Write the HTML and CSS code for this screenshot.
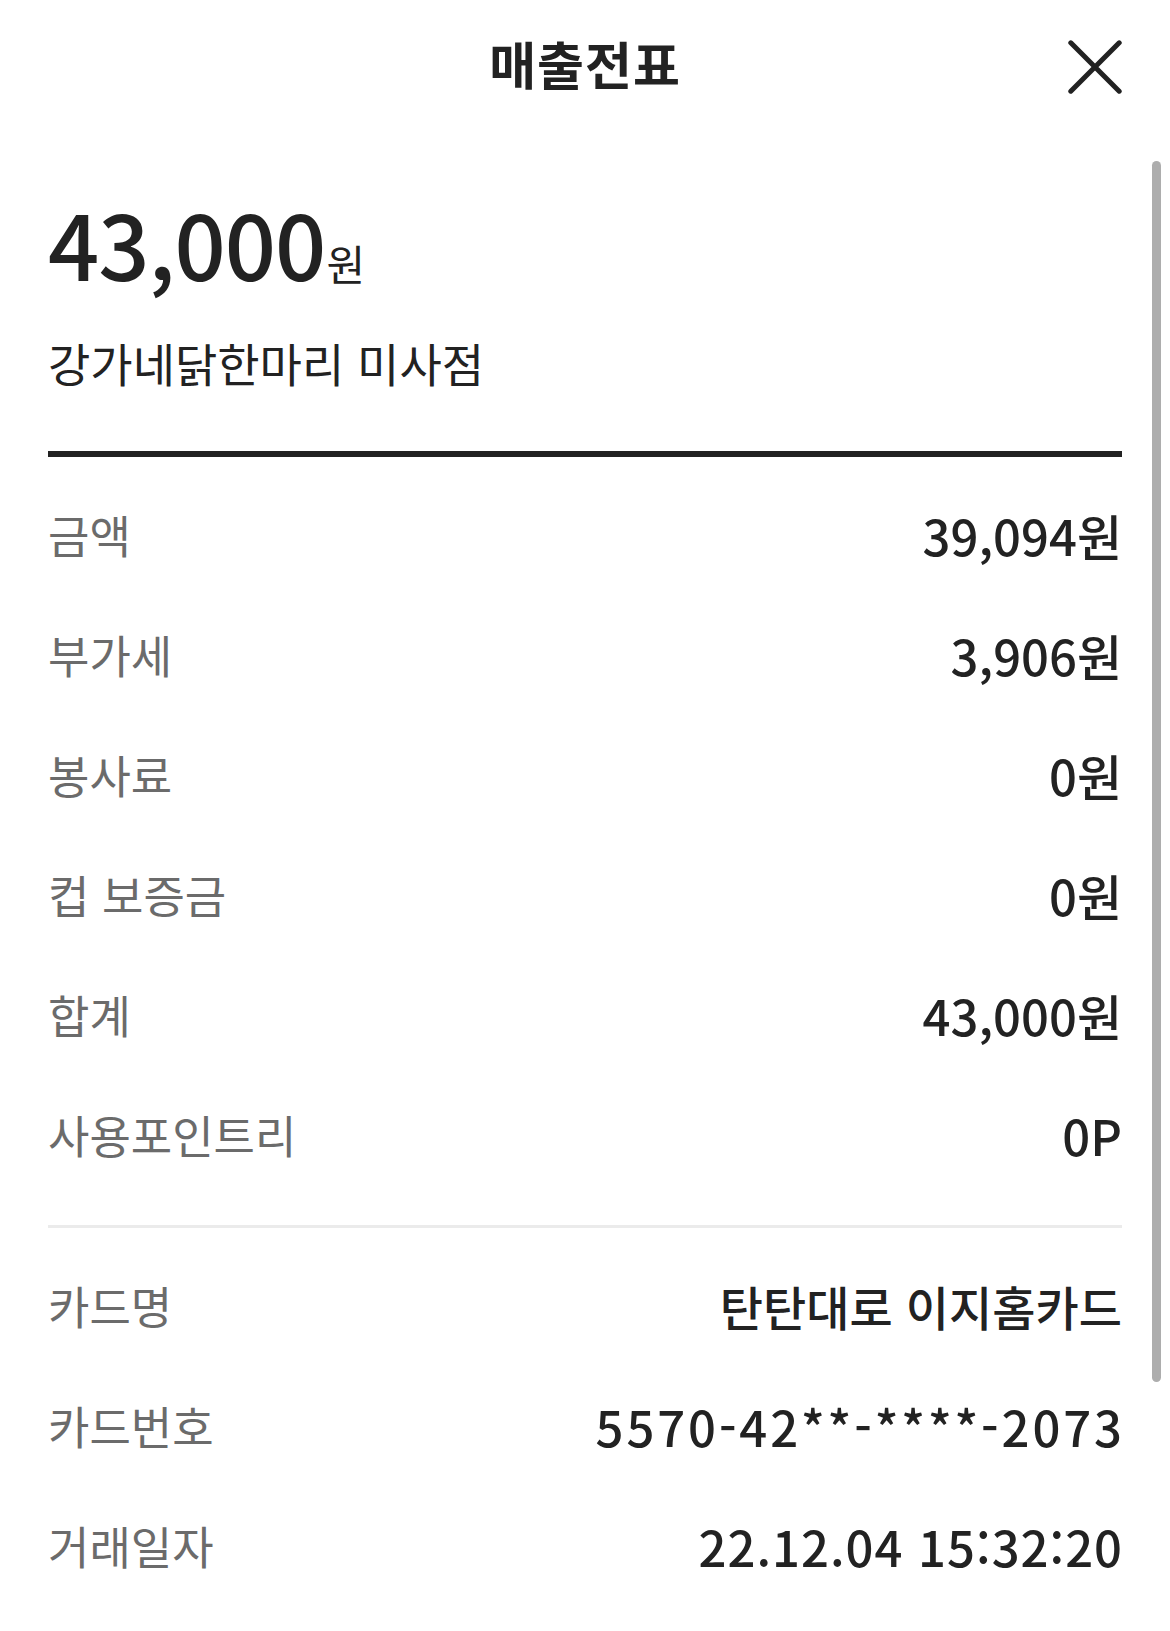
FILE: index.html
```html
<!DOCTYPE html>
<html lang="ko">
<head>
<meta charset="utf-8">
<title>매출전표</title>
<link rel="stylesheet" href="styles.css">
</head>
<body>
<div class="sheet">
  <header class="header">
    <span class="header-side"></span>
    <h1 class="title">매출전표</h1>
    <button class="close" aria-label="닫기">
      <svg width="54" height="54" viewBox="0 0 54 54" aria-hidden="true">
        <path d="M2.8 2.8 L51.2 51.2 M51.2 2.8 L2.8 51.2" stroke="#222" stroke-width="5" stroke-linecap="round" fill="none"/>
      </svg>
    </button>
  </header>

  <section class="summary">
    <div class="amount"><span class="amount-num">43,000</span><span class="amount-unit">원</span></div>
    <div class="store">강가네닭한마리 미사점</div>
  </section>

  <div class="rule-thick"></div>

  <dl class="rows">
    <div class="row"><dt class="label">금액</dt><dd class="value">39,094원</dd></div>
    <div class="row"><dt class="label">부가세</dt><dd class="value">3,906원</dd></div>
    <div class="row"><dt class="label">봉사료</dt><dd class="value">0원</dd></div>
    <div class="row"><dt class="label">컵 보증금</dt><dd class="value">0원</dd></div>
    <div class="row"><dt class="label">합계</dt><dd class="value">43,000원</dd></div>
    <div class="row"><dt class="label">사용포인트리</dt><dd class="value">0P</dd></div>
  </dl>

  <div class="rule-thin"></div>

  <dl class="rows">
    <div class="row"><dt class="label">카드명</dt><dd class="value value-name">탄탄대로 이지홈카드</dd></div>
    <div class="row"><dt class="label">카드번호</dt><dd class="value value-card">5570-42**-****-2073</dd></div>
    <div class="row"><dt class="label">거래일자</dt><dd class="value value-date">22.12.04 15:32:20</dd></div>
  </dl>
</div>
<div class="scrollbar"></div>
</body>
</html>
```

FILE: styles.css
```css
* { box-sizing: border-box; }

html, body {
  margin: 0;
  padding: 0;
  background: #ffffff;
}

body {
  width: 1170px;
  height: 1631px;
  overflow: hidden;
  position: relative;
  font-family: "Noto Sans CJK KR", "Noto Sans", sans-serif;
  color: #222222;
}

.sheet {
  padding: 0 48px;
}

.header {
  height: 133px;
  display: grid;
  grid-template-columns: 1fr auto 1fr;
  align-items: center;
}

.title {
  margin: 0;
  padding-bottom: 6px;
  font-size: 51px;
  line-height: 1;
  font-weight: 700;
  color: #222222;
  letter-spacing: 1px;
}

.close {
  justify-self: end;
  width: 54px;
  height: 54px;
  padding: 0;
  border: 0;
  background: none;
  display: flex;
}

.summary {
  padding-top: 64px;
}

.amount {
  line-height: 90px;
  height: 90px;
  white-space: nowrap;
}

.amount-num {
  font-size: 90px;
  font-weight: 500;
  letter-spacing: -1px;
  color: #222222;
}

.amount-unit {
  font-size: 42px;
  line-height: 1;
  font-weight: 400;
  margin-left: 1px;
  color: #222222;
}

.store {
  margin-top: 45px;
  font-size: 46px;
  line-height: 60px;
  font-weight: 400;
  color: #222222;
}

.rule-thick {
  margin-top: 59px;
  height: 6px;
  background: #222222;
}

.rows {
  margin: 18px 0 0;
  padding: 0;
}

.row {
  height: 120px;
  display: flex;
  align-items: center;
  justify-content: space-between;
}

.label {
  margin: 0;
  font-size: 45px;
  line-height: 120px;
  font-weight: 400;
  color: #6b6b6b;
}

.value {
  margin: 0;
  font-size: 49px;
  line-height: 120px;
  font-weight: 500;
  color: #222222;
  white-space: nowrap;
}

.value-name {
  font-size: 47px;
}

.value-card {
  letter-spacing: 2.9px;
  margin-right: -2.9px;
}

.value-date {
  letter-spacing: 1px;
  margin-right: -1px;
}

.rule-thin {
  margin-top: 30px;
  height: 3px;
  background: #ebebeb;
}

.scrollbar {
  position: absolute;
  left: 1152px;
  top: 161px;
  width: 9px;
  height: 1221px;
  border-radius: 5px;
  background: #adadad;
}
```
